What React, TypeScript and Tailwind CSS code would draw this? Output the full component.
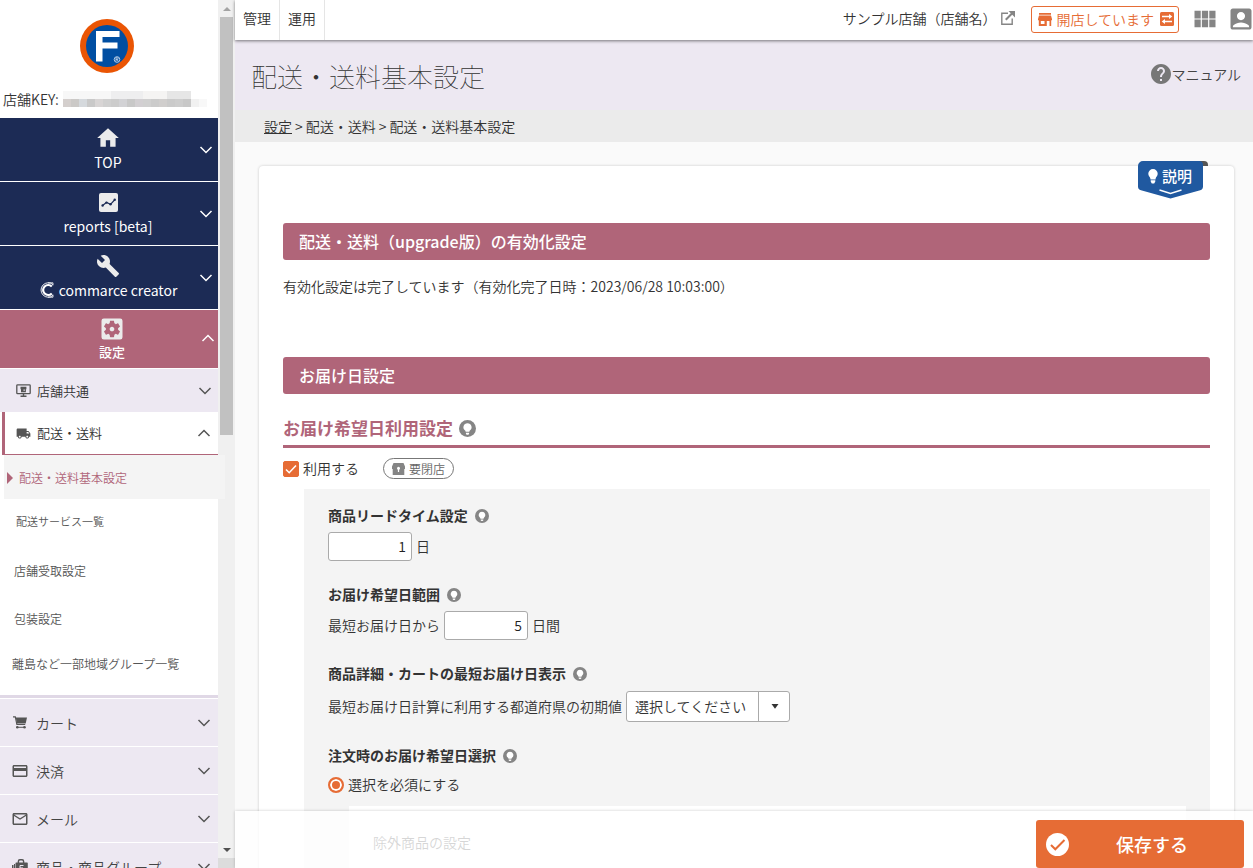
import type { ReactNode } from "react";
import {
  MdAccountBox,
  MdBuild,
  MdCreditCard,
  MdHelp,
  MdHome,
  MdLocalShipping,
  MdOutlineMailOutline,
  MdSettingsApplications,
  MdViewModule,
} from "react-icons/md";

function Chevron({ up = false, className = "" }: { up?: boolean; className?: string }) {
  return (
    <svg viewBox="0 0 14 8" className={`h-2 w-3.5 shrink-0 ${className}`} fill="none" stroke="currentColor" aria-hidden="true">
      <path d={up ? "M1.5 7 7 1.5 12.500 7" : "M1.500 1 7 6.500 12.500 1"} strokeWidth="1.500" />
    </svg>
  );
}

function BrandLogo() {
  return (
    <svg viewBox="0 0 54 54" className="mr-1 size-[54px]" role="img" aria-label="F">
      <circle cx="27" cy="27" r="27" fill="#ea5504" />
      <circle cx="27" cy="27" r="21" fill="#004ea2" />
      <path d="M16 12h23.500v6H22.500v5.500h15v6h-15v13H16z" fill="#fff" />
      <circle cx="37" cy="40.500" r="2.800" fill="none" stroke="#dfe8f3" strokeWidth=".8" />
      <path d="M36 42.200v-3.400h1.200a.9.900 0 0 1 0 1.800H36m1.200 0 .9 1.600" fill="none" stroke="#dfe8f3" strokeWidth=".7" />
    </svg>
  );
}

function ReportIcon() {
  return (
    <svg viewBox="0 0 19 19" className="size-[19px]" aria-hidden="true">
      <rect width="19" height="19" rx="2" fill="#ebebeb" />
      <path d="m3.500 12.500 4-3 4 1.800 4.500-4.800" fill="none" stroke="#1c2b55" strokeWidth="1.200" />
      <circle cx="3.600" cy="12.500" r="1.200" fill="#1c2b55" />
      <circle cx="7.500" cy="9.600" r="1.200" fill="#1c2b55" />
      <circle cx="11.500" cy="11.200" r="1.200" fill="#1c2b55" />
      <circle cx="15.700" cy="6.700" r="1.200" fill="#1c2b55" />
    </svg>
  );
}

function CreatorMark() {
  return (
    <svg viewBox="0 0 16 16" className="size-4" fill="none" stroke="#fff" aria-hidden="true">
      <path d="M14 2.600A7.200 7.200 0 1 0 14 13.400" strokeWidth=".9" />
      <path d="M12.800 4.600A5 5 0 1 0 12.800 11.400" strokeWidth="2.200" />
      <path d="M9 .8h5v2.500M9 15.200h5v-2.500" strokeWidth=".8" />
    </svg>
  );
}

function MonitorIcon() {
  return (
    <svg viewBox="0 0 15 13" className="h-[13px] w-[15px]" fill="none" stroke="#555" aria-hidden="true">
      <rect x=".8" y=".8" width="13.400" height="8.900" rx=".8" strokeWidth="1.300" />
      <path d="M4.500 12.300h6M7.500 10v2" strokeWidth="1.400" />
      <path d="M4.500 2.700h5.900v2.600H9.900v2.900H5V5.300h-.5z" fill="#555" stroke="none" />
      <path d="M7.500 5.400h1.300v1.300H7.500z" fill="#ede8f2" stroke="none" />
    </svg>
  );
}

function CartIcon() {
  return (
    <svg viewBox="0 0 14 13" className="h-[13px] w-3.5" fill="none" stroke="#555" aria-hidden="true">
      <path d="M0 .8h2.300l1.600 7.700h8.300" strokeWidth="1.200" />
      <path d="M2.700 1.600H14l-1.300 6H4z" fill="#555" stroke="none" />
      <path d="M4 11.300h8" strokeWidth="1" />
      <circle cx="4.300" cy="11.300" r="1.300" fill="#555" stroke="none" />
      <circle cx="11.500" cy="11.300" r="1.300" fill="#555" stroke="none" />
    </svg>
  );
}

function GoodsIcon() {
  return (
    <svg viewBox="0 0 16 15" className="h-[15px] w-4" aria-hidden="true">
      <path d="M4.200 3.500h1.500V2.200A2.200 2.200 0 0 1 7.900 0h2.200a2.200 2.200 0 0 1 2.200 2.200v1.300H15a.8.800 0 0 1 .8.800V15H3.500V4.300a.8.800 0 0 1 .7-.8zM7.100 3.500h3.800V2.400a1 1 0 0 0-1-1H8.100a1 1 0 0 0-1 1z" fill="#555" fillRule="evenodd" />
      <path d="M8 6.500h3.500M8 6.500V12M8 9h3" stroke="#ede8f2" strokeWidth="1" fill="none" />
      <path d="M0 6h1.500v9H0zM2 5h1v10H2z" fill="#555" />
    </svg>
  );
}

function ExternalIcon() {
  return (
    <svg viewBox="0 0 16 16" className="size-4" aria-hidden="true">
      <path d="M8 3.300H1.800v11h10.400V8.500" fill="none" stroke="#858585" strokeWidth="1.400" />
      <path d="m5.800 9.700 6.400-6.400" stroke="#858585" strokeWidth="2" />
      <path d="M8.500 1H15v6.500z" fill="#858585" />
    </svg>
  );
}

function ShopIcon() {
  return (
    <svg viewBox="0 0 14 13" className="h-[13px] w-3.5" aria-hidden="true">
      <path d="M1 0h12v1.800H1zM1 2.600h12l1 3.400v1.200h-.8V13h-1.700V8H8.800v5H.8V7.200H0V6z" fill="#e66c35" />
      <path d="M2.800 8h3.700v3H2.800z" fill="#fff" />
    </svg>
  );
}

function Hint({ label, large = false }: { label: string; large?: boolean }) {
  return (
    <button type="button" aria-label={label} className={large ? "size-[17px] shrink-0" : "size-3.5 shrink-0"}>
      <svg viewBox="0 0 17 17" className="size-full" aria-hidden="true">
        <circle cx="8.500" cy="8.500" r="8.500" fill="#858585" />
        <path d="M8.500 3.200a4.100 4.100 0 0 0-2.400 7.400c.4.400.5.700.5 1.200h3.800c0-.5.100-.8.500-1.200a4.100 4.100 0 0 0-2.400-7.400z" fill="#fff" />
        <path d="M6.900 12.700h3.200v.8a1.200 1.200 0 0 1-1.200 1.200h-.8a1.200 1.200 0 0 1-1.200-1.200z" fill="#fff" />
      </svg>
    </button>
  );
}

function PrimaryItem({ icon, children }: { icon: ReactNode; children: ReactNode }) {
  return (
    <button type="button" className="relative flex h-16 w-full shrink-0 flex-col items-center border-b border-white bg-[#1c2b55] pt-2 pr-0.5 text-sm font-normal text-white">
      <span className="flex h-6 items-center text-[#ebebeb]">{icon}</span>
      <span className="flex h-6 items-center gap-1">{children}</span>
      <Chevron className="absolute top-7 right-[5px]" />
    </button>
  );
}

function SubLink({ children, className }: { children: ReactNode; className: string }) {
  return (
    <a href="#" className={`flex shrink-0 items-center text-[#555] ${className}`}>
      {children}
    </a>
  );
}

function GroupItem({ icon, children }: { icon: ReactNode; children: ReactNode }) {
  return (
    <button type="button" className="flex h-12 w-full shrink-0 items-center gap-2 border-b border-white bg-[#ede8f2] pr-[7px] pl-3 text-sm text-[#444]">
      <span className="flex w-4 justify-center text-[#555]">{icon}</span>
      <span>{children}</span>
      <Chevron className="ml-auto text-[#555]" />
    </button>
  );
}

const keyMosaic = [
  "bg-[#d4cfcd]", "bg-[#cbc9c7]", "bg-[#d5d9dd]", "bg-[#c9c9c9]", "bg-[#d8d5d5]", "bg-[#d0d0d0]",
  "bg-[#cccccc]", "bg-[#d2d2d5]", "bg-[#c8c8c8]", "bg-[#d2cfd2]", "bg-[#d0d0d0]", "bg-[#cbcbcb]",
  "bg-[#d0cecd]", "bg-[#cacaca]", "bg-[#cdcdcd]", "bg-[#c8c8c8]", "bg-[#f1f1f1]", "bg-[#f8f8f8]",
];

function Sidebar() {
  return (
    <nav aria-label="メインメニュー" className="relative z-10 flex w-[218px] shrink-0 flex-col bg-white">
      <div className="flex h-[118px] shrink-0 flex-col items-center pt-[19px]">
        <BrandLogo />
        <div className="mt-4 flex h-5 w-full items-center pl-[3px] text-sm text-[#333]">
          <span>店舗KEY:</span>
          <div className="ml-1 flex flex-col" aria-hidden="true">
            <div className="flex h-2">
              <span className="w-12 bg-[#f7f7f7]" />
              <span className="w-8 bg-[#eeeeef]" />
              <span className="w-6 bg-[#f5f4f3]" />
              <span className="w-6 bg-[#e6e6e6]" />
            </div>
            <div className="flex h-2">
              {keyMosaic.map((tone, i) => (
                <span key={i} className={`w-2 ${tone}`} />
              ))}
            </div>
          </div>
        </div>
      </div>

      <PrimaryItem icon={<MdHome className="size-[26px]" />}>TOP</PrimaryItem>
      <PrimaryItem icon={<ReportIcon />}>reports [beta]</PrimaryItem>
      <PrimaryItem icon={<MdBuild className="size-6" />}>
        <CreatorMark />
        commarce creator
      </PrimaryItem>

      <button type="button" className="relative flex h-[58px] w-full shrink-0 flex-col items-center bg-[#b06579] pt-[5px] pl-1.5 text-[13px] font-medium text-white">
        <MdSettingsApplications className="size-7 shrink-0 text-[#ebebeb]" />
        <span className="flex h-[18px] items-center">設定</span>
        <Chevron up className="absolute top-6 right-[3px]" />
      </button>

      <button type="button" className="flex h-11 w-full shrink-0 items-center border-t border-white bg-[#ede8f2] pr-1.5 pl-4 text-[13px] text-[#333]">
        <MonitorIcon />
        <span className="ml-1.5">店舗共通</span>
        <Chevron className="ml-auto text-[#555]" />
      </button>
      <button type="button" className="ml-0.5 flex h-[43px] shrink-0 items-center border-b border-l-3 border-[#b06579] bg-white pr-[7px] pl-[11px] text-[13px] text-[#333]">
        <MdLocalShipping className="size-[15px] text-[#555]" />
        <span className="ml-1.5">配送・送料</span>
        <Chevron up className="ml-auto text-[#555]" />
      </button>
      <a href="#" aria-current="page" className="-mr-[7px] ml-1 flex h-11 shrink-0 items-center bg-[#f4f4f4] pt-0.5 pl-[3px] text-xs text-[#b06579]">
        <svg viewBox="0 0 6 12" className="h-3 w-1.5" aria-hidden="true">
          <path d="M0 0v12l6-6z" fill="currentColor" />
        </svg>
        <span className="ml-1.5">配送・送料基本設定</span>
      </a>
      <SubLink className="h-11 pl-4 text-[11px]">配送サービス一覧</SubLink>
      <SubLink className="h-14 pl-3.5 text-xs">店舗受取設定</SubLink>
      <SubLink className="h-10 pl-3.5 text-xs">包装設定</SubLink>
      <SubLink className="h-[50px] pl-3 text-xs">離島など一部地域グループ一覧</SubLink>
      <div className="mt-[6px] h-1 shrink-0 border-b border-white bg-[#e0d8e6]" />

      <GroupItem icon={<CartIcon />}>カート</GroupItem>
      <GroupItem icon={<MdCreditCard className="size-[18px] shrink-0" />}>決済</GroupItem>
      <GroupItem icon={<MdOutlineMailOutline className="size-[18px] shrink-0" />}>メール</GroupItem>
      <GroupItem icon={<GoodsIcon />}>商品・商品グループ</GroupItem>
    </nav>
  );
}

function ScrollTrack() {
  return (
    <div aria-hidden="true" className="flex w-[17px] shrink-0 flex-col items-center bg-[#f0f0f0]">
      <div className="flex h-[17px] shrink-0 items-center">
        <svg viewBox="0 0 8 4" className="h-1 w-2"><path d="M0 4 4 0l4 4z" fill="#a3a3a3" /></svg>
      </div>
      <div className="h-[418px] w-[13px] shrink-0 bg-[#c1c1c1]" />
      <div className="mt-auto flex h-[17px] shrink-0 items-center">
        <svg viewBox="0 0 8 4" className="h-1 w-2"><path d="m0 0 4 4 4-4z" fill="#505050" /></svg>
      </div>
      <div className="h-2.5 w-full shrink-0 bg-[#dcdcdc]" />
    </div>
  );
}

function TopBar() {
  return (
    <header className="relative z-10 flex h-10 shrink-0 items-center bg-white text-sm text-[#333] shadow-[0_1px_3px_rgba(0,0,0,0.5)]">
      <a href="#" className="flex h-full items-center border-r border-[#e5e5e5] px-2 pb-1">管理</a>
      <a href="#" className="flex h-full items-center border-r border-[#e5e5e5] px-2 pb-1">運用</a>
      <div className="-mr-0.5 ml-auto flex h-full items-center pb-0.5">
        <a href="#" className="mr-[15px] flex items-center gap-1 pb-0.5">
          サンプル店舗（店舗名）
          <ExternalIcon />
        </a>
        <button type="button" className="flex h-[27px] items-center gap-1 rounded-[3px] border border-[#e66c35] px-1.5 pr-1 text-sm text-[#e66c35]">
          <ShopIcon />
          <span>開店しています</span>
          <svg viewBox="0 0 14 14" className="ml-0.5 size-3.5" aria-hidden="true">
            <rect width="14" height="14" rx="1.500" fill="#e66c35" />
            <path d="M2 4.500h8M12 9.500H4" stroke="#fff" strokeWidth="1.300" />
            <path d="M9 2v5l3.300-2.500zM5 7v5L1.700 9.500z" fill="#fff" />
          </svg>
        </button>
        <button type="button" aria-label="アプリ一覧" className="ml-3 text-[#858585]">
          <MdViewModule className="size-7" />
        </button>
        <button type="button" aria-label="アカウント" className="ml-2 text-[#858585]">
          <MdAccountBox className="size-7" />
        </button>
      </div>
    </header>
  );
}

function SectionBar({ children }: { children: ReactNode }) {
  return (
    <h2 className="flex h-[37px] items-center rounded-[3px] bg-[#b06579] px-4 pb-0.5 text-base font-medium text-white">{children}</h2>
  );
}

function FieldTitle({ children }: { children: string }) {
  return (
    <div className="flex h-5 items-center gap-[7px]">
      <h4 className="pb-0.5 text-sm font-bold text-[#333]">{children}</h4>
      <Hint label={`${children}の説明`} />
    </div>
  );
}

function ExplainBadge() {
  return (
    <button type="button" className="absolute -top-[5px] right-[26px] flex h-[38px] w-[70px] items-start text-white">
      <svg viewBox="0 0 70 38" className="absolute inset-0 h-full w-full" aria-hidden="true">
        <path d="M58 0h8a4 4 0 0 1 4 4v1H58z" fill="#555" />
        <path d="M5 0h56a4 4 0 0 1 4 4v21.500a4 4 0 0 1-2.800 3.800L32.500 37.500 3 29.300A4 4 0 0 1 0 25.500V5a5 5 0 0 1 5-5z" fill="#2059a0" />
        <path d="m21.500 29 11 3.500 11-3.500" fill="none" stroke="#fff" strokeWidth="1.400" />
      </svg>
      <span className="relative flex h-[30px] items-center gap-1 pl-2.5 text-[15px] font-medium">
        <svg viewBox="0 0 10 15" className="h-[15px] w-2.5" aria-hidden="true">
          <path d="M5 0a4.700 4.700 0 0 0-4.700 4.700c0 2 1.400 3 1.900 4.300.2.600.2 1 .3 1.500h5c.1-.5.100-.9.300-1.500.5-1.300 1.900-2.300 1.900-4.300A4.700 4.700 0 0 0 5 0zM2.700 11.300h4.600v1.300L6.200 14.500H3.800l-1.100-1.900z" fill="#fff" />
        </svg>
        説明
      </span>
    </button>
  );
}

const inputClass = "h-[29px] w-[84px] rounded-[3px] border border-[#aaa] bg-white px-[5px] pb-0.5 text-right text-sm text-[#222]";

function SettingsCard() {
  return (
    <section className="relative mt-6 mr-[19px] ml-6 rounded-[4px] bg-white px-6 pt-[57px] pb-20 shadow-[0_0_3px_rgba(0,0,0,0.2)]">
      <ExplainBadge />
      <SectionBar>配送・送料（upgrade版）の有効化設定</SectionBar>
      <p className="mt-4 h-5 text-sm leading-5">有効化設定は完了しています（有効化完了日時：2023/06/28 10:03:00）</p>
      <div className="mt-[61px]">
        <SectionBar>お届け日設定</SectionBar>
      </div>

      <div className="mt-5 flex h-[34px] items-start gap-1.5 border-b-3 border-[#b06579]">
        <h3 className="text-[17px] leading-7 font-bold text-[#b06579]">お届け希望日利用設定</h3>
        <div className="flex h-7 items-center">
          <Hint large label="お届け希望日利用設定の説明" />
        </div>
      </div>

      <div className="mt-2.5 flex h-[21px] items-center">
        <label className="flex items-center gap-1 text-sm">
          <span className="grid size-4 place-items-center">
            <input type="checkbox" defaultChecked className="col-start-1 row-start-1 size-4 appearance-none rounded-[2px] border border-[#e66c35] bg-white checked:bg-[#e66c35]" />
            <svg viewBox="0 0 16 16" className="pointer-events-none col-start-1 row-start-1 size-4" aria-hidden="true">
              <path d="m3 8.500 3.200 3.200L13 4.500" fill="none" stroke="#fff" strokeWidth="1.600" />
            </svg>
          </span>
          <span className="pb-0.5">利用する</span>
        </label>
        <span className="ml-6 flex h-[21px] items-center gap-1 rounded-full border border-[#777] px-2 text-xs text-[#666]">
          <svg viewBox="0 0 13 12" className="h-3 w-[13px]" aria-hidden="true">
            <path d="M1.500 0h10L13 3.500V6h-.7v6H.7V6H0V3.500z" fill="#858585" />
            <circle cx="6.500" cy="5.300" r="1.500" fill="#fff" />
            <path d="M5.900 5.500h1.200V9H5.900z" fill="#fff" />
          </svg>
          要閉店
        </span>
      </div>

      <div className="mt-2.5 ml-[21px] bg-[#f4f4f4] px-6 pt-[17px] pb-6 text-sm">
        <FieldTitle>商品リードタイム設定</FieldTitle>
        <label className="mt-[6px] flex items-center gap-1">
          <input type="text" inputMode="numeric" defaultValue="1" aria-label="商品リードタイム" className={inputClass} />
          <span className="pb-0.5">日</span>
        </label>

        <div className="mt-6">
          <FieldTitle>お届け希望日範囲</FieldTitle>
        </div>
        <label className="mt-[6px] flex items-center gap-1">
          <span className="pb-0.5">最短お届け日から</span>
          <input type="text" inputMode="numeric" defaultValue="5" className={inputClass} />
          <span className="pb-0.5">日間</span>
        </label>

        <div className="mt-6">
          <FieldTitle>商品詳細・カートの最短お届け日表示</FieldTitle>
        </div>
        <div className="mt-[7px] flex items-center gap-1">
          <label htmlFor="prefecture" className="pb-0.5">最短お届け日計算に利用する都道府県の初期値</label>
          <div className="grid grid-cols-[1fr_32px] items-center">
            <select id="prefecture" className="col-span-2 col-start-1 row-start-1 h-[31px] w-[164px] appearance-none rounded-[3px] border border-[#aaa] bg-white pb-0.5 pl-2 text-sm text-[#333]">
              <option>選択してください</option>
            </select>
            <span aria-hidden="true" className="pointer-events-none z-0 col-start-2 row-start-1 flex h-[31px] items-center justify-center border-l border-[#aaa]">
              <svg viewBox="0 0 8 5" className="h-[5px] w-2"><path d="M.5 0h7L4 4.800z" fill="#333" /></svg>
            </span>
          </div>
        </div>

        <div className="mt-6">
          <FieldTitle>注文時のお届け希望日選択</FieldTitle>
        </div>
        <label className="mt-[9px] flex h-5 items-center gap-1">
          <input type="radio" name="date-choice" defaultChecked className="size-4 appearance-none rounded-full border-2 border-[#e66c35] bg-white checked:bg-[#e66c35] checked:shadow-[inset_0_0_0_2px_#fff]" />
          <span className="pb-0.5">選択を必須にする</span>
        </label>
        <div className="mt-[11px] ml-[21px] h-40 bg-white px-6 pt-[26px]">除外商品の設定</div>
      </div>
    </section>
  );
}

export default function App() {
  return (
    <div className="flex h-screen overflow-hidden bg-[#fafafa] font-['Noto_Sans_CJK_JP',sans-serif] font-[350] text-[#333]">
      <Sidebar />
      <ScrollTrack />
      <div className="relative flex min-w-0 flex-1 flex-col">
        <TopBar />
        <main className="min-h-0 flex-1 overflow-hidden">
          <div className="flex h-[70px] items-center bg-[#ede8f2] pr-3 pl-4">
            <h1 className="text-[26px] font-thin">配送・送料基本設定</h1>
            <a href="#" className="ml-auto flex items-center pb-0.5 text-sm text-[#444]">
              <MdHelp className="-mr-0.5 size-6 text-[#777]" />
              マニュアル
            </a>
          </div>
          <nav aria-label="パンくずリスト" className="flex h-8 items-center gap-[3px] bg-[#ebebeb] pb-px pl-[29px] text-sm">
            <a href="#" className="underline">設定</a>
            <span>&gt;</span>
            <span>配送・送料</span>
            <span>&gt;</span>
            <span>配送・送料基本設定</span>
          </nav>
          <SettingsCard />
        </main>
        <footer className="absolute inset-x-0 bottom-0 flex h-[57px] justify-end bg-white/80 pt-[9px] pr-[9px] shadow-[0_0_3px_rgba(0,0,0,0.2)]">
          <button type="button" className="flex h-12 w-52 items-center rounded-[3px] bg-[#e66c35] pl-2.5 text-lg font-medium text-white">
            <svg viewBox="0 0 23 23" className="size-[23px]" aria-hidden="true">
              <circle cx="11.500" cy="11.500" r="11.500" fill="#fff" />
              <path d="m5 12 4.300 4.300L18.500 7" fill="none" stroke="#e66c35" strokeWidth="2" />
            </svg>
            <span className="ml-[47px]">保存する</span>
          </button>
        </footer>
      </div>
    </div>
  );
}
